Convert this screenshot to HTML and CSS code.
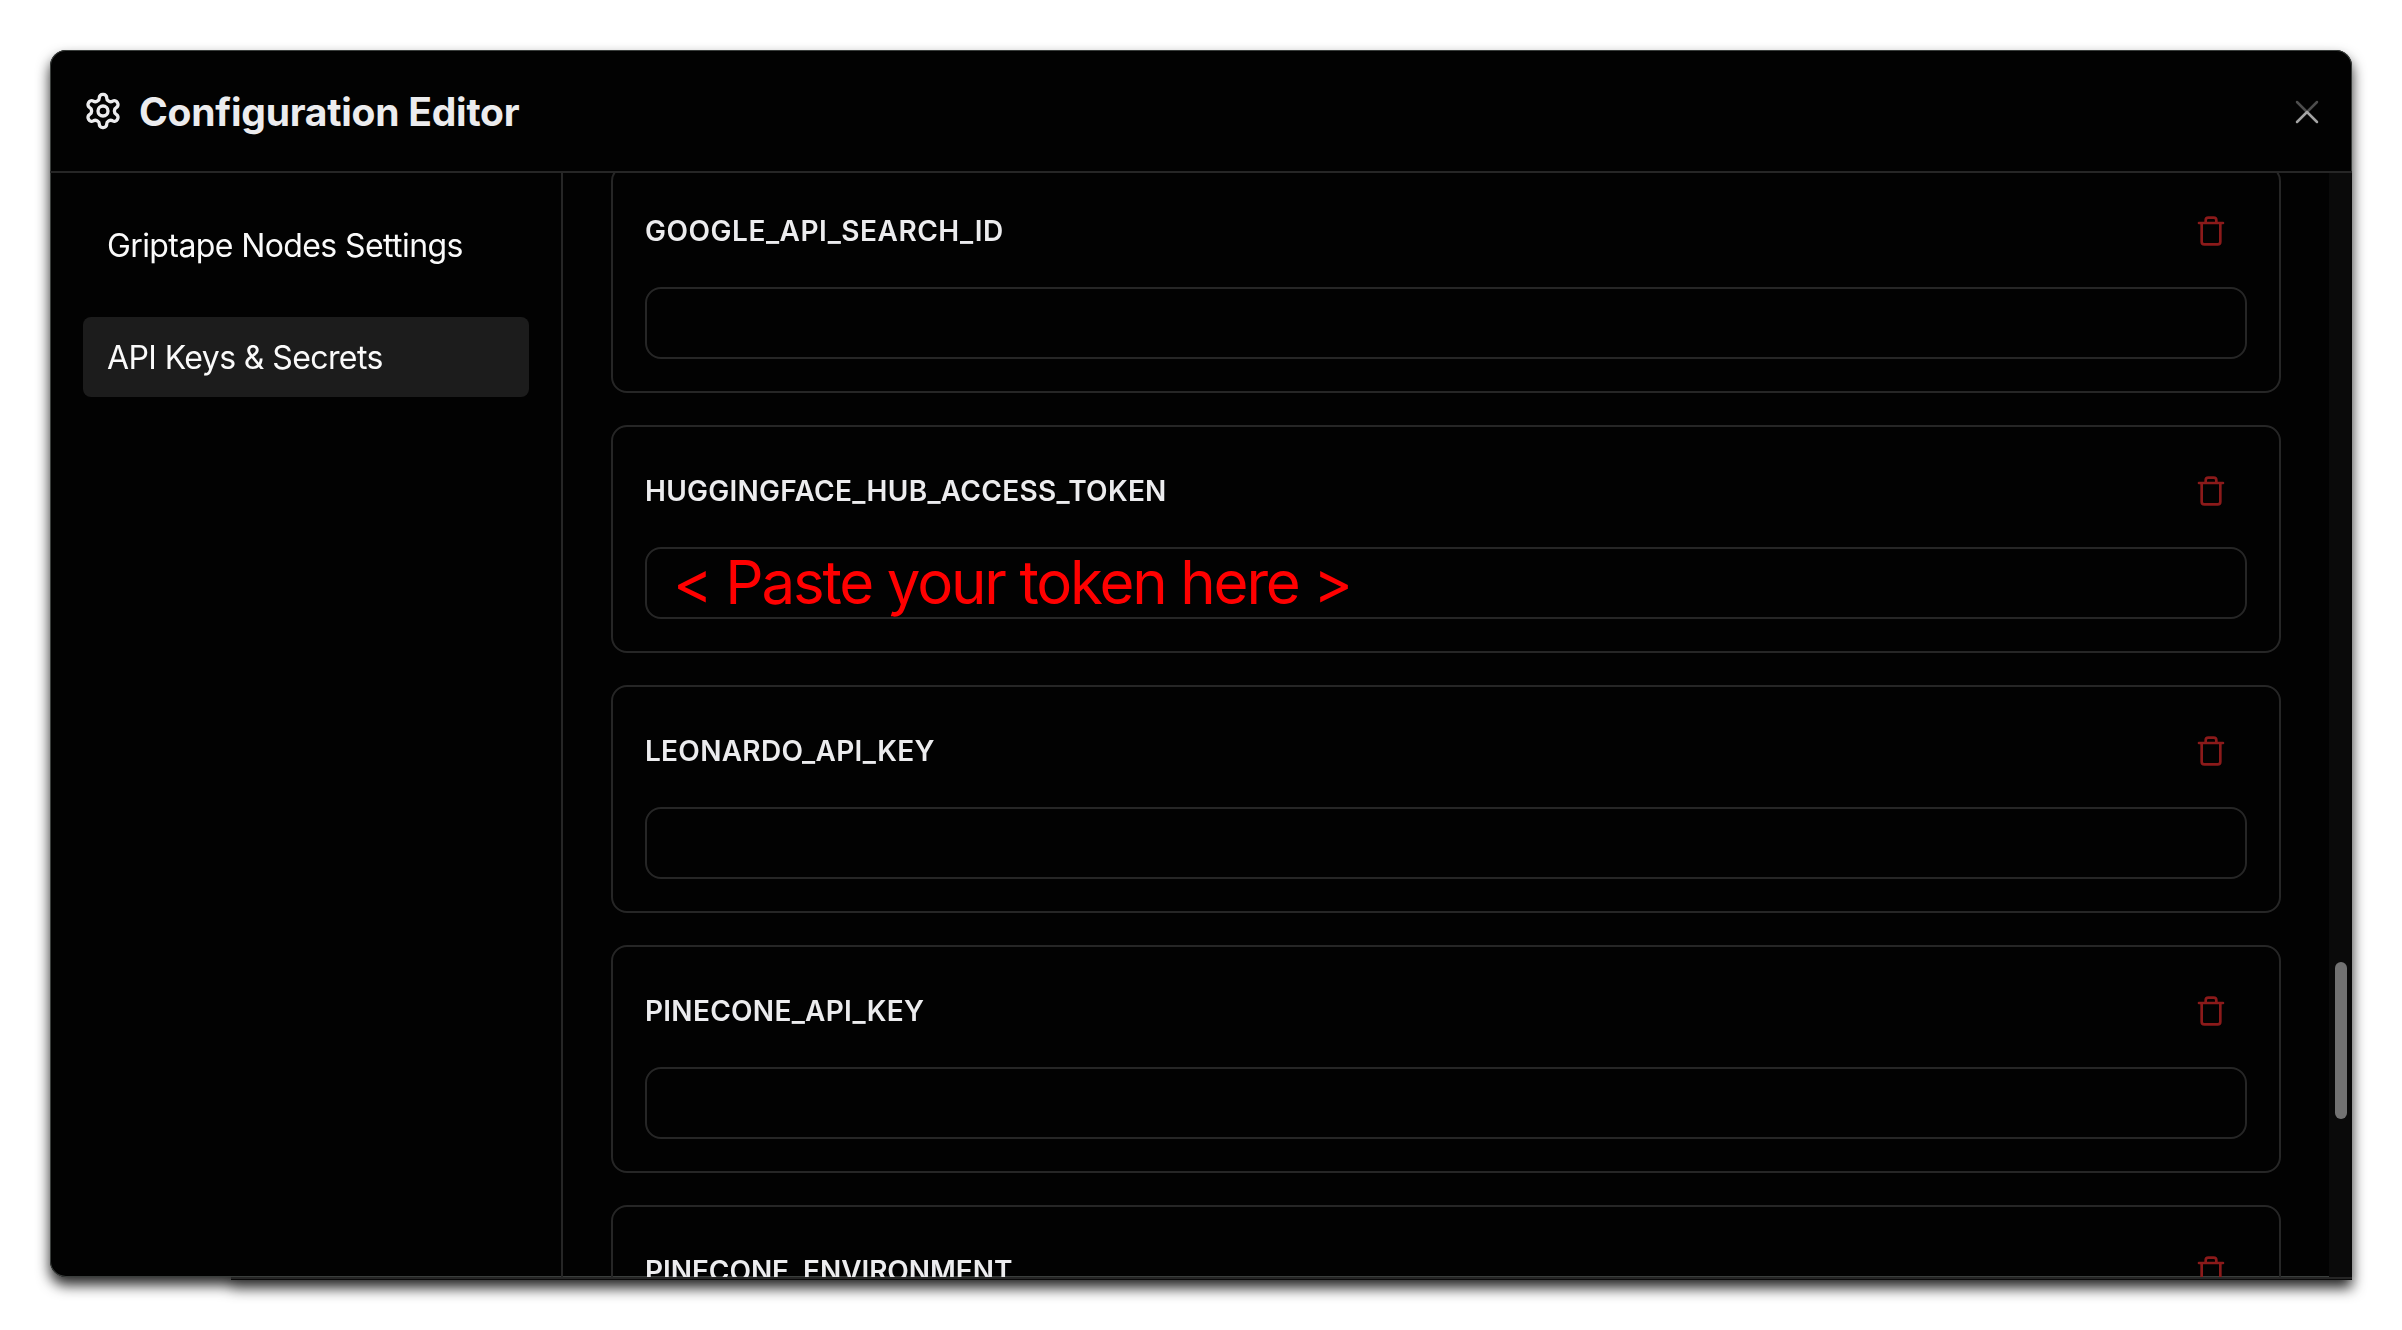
FILE: index.html
```html
<!DOCTYPE html>
<html lang="en">
<head>
<meta charset="utf-8">
<title>Configuration Editor</title>
<link rel="stylesheet" href="styles.css">
</head>
<body>
<svg class="sprite" aria-hidden="true">
  <symbol id="trash" viewBox="0 0 24 24"><path d="M3 6h18M19 6v14a2 2 0 0 1-2 2H7a2 2 0 0 1-2-2V6M8 6V4a2 2 0 0 1 2-2h4a2 2 0 0 1 2 2v2"/></symbol>
</svg>
<div class="window">
  <main class="modal">
    <header class="header">
      <svg class="gear" viewBox="0 0 24 24"><path d="M12.22 2h-.44a2 2 0 0 0-2 2v.18a2 2 0 0 1-1 1.73l-.43.25a2 2 0 0 1-2 0l-.15-.08a2 2 0 0 0-2.73.73l-.22.38a2 2 0 0 0 .73 2.73l.15.1a2 2 0 0 1 1 1.72v.51a2 2 0 0 1-1 1.74l-.15.09a2 2 0 0 0-.73 2.73l.22.38a2 2 0 0 0 2.73.73l.15-.08a2 2 0 0 1 2 0l.43.25a2 2 0 0 1 1 1.73V20a2 2 0 0 0 2 2h.44a2 2 0 0 0 2-2v-.18a2 2 0 0 1 1-1.73l.43-.25a2 2 0 0 1 2 0l.15.08a2 2 0 0 0 2.73-.73l.22-.39a2 2 0 0 0-.73-2.73l-.15-.08a2 2 0 0 1-1-1.74v-.5a2 2 0 0 1 1-1.74l.15-.09a2 2 0 0 0 .73-2.73l-.22-.38a2 2 0 0 0-2.73-.73l-.15.08a2 2 0 0 1-2 0l-.43-.25a2 2 0 0 1-1-1.73V4a2 2 0 0 0-2-2z"/><circle cx="12" cy="12" r="3"/></svg>
      <h1 class="title">Configuration Editor</h1>
      <button class="close" aria-label="Close"><svg viewBox="0 0 24 24"><path class="close-top" d="M6 6l6 6 6-6"/><path class="close-bottom" d="M6 18l6-6 6 6"/></svg></button>
    </header>
    <div class="body">
      <nav class="sidebar">
        <a class="nav-item">Griptape Nodes Settings</a>
        <a class="nav-item active">API Keys &amp; Secrets</a>
      </nav>
      <section class="content">
        <div class="card"><div class="card-head"><span class="label loose">GOOGLE_API_SEARCH_ID</span><svg class="trash"><use href="#trash"/></svg></div><div class="field"></div></div>
        <div class="card"><div class="card-head"><span class="label">HUGGINGFACE_HUB_ACCESS_TOKEN</span><svg class="trash"><use href="#trash"/></svg></div><div class="field"><span class="hint">&lt; Paste your token here &gt;</span></div></div>
        <div class="card"><div class="card-head"><span class="label">LEONARDO_API_KEY</span><svg class="trash"><use href="#trash"/></svg></div><div class="field"></div></div>
        <div class="card"><div class="card-head"><span class="label">PINECONE_API_KEY</span><svg class="trash"><use href="#trash"/></svg></div><div class="field"></div></div>
        <div class="card"><div class="card-head"><span class="label tight">PINECONE_ENVIRONMENT</span><svg class="trash"><use href="#trash"/></svg></div><div class="field"></div></div>
      </section>
      <div class="scrollbar"><div class="thumb"></div></div>
    </div>
  </main>
  <div class="bottom-edge"></div>
</div>
</body>
</html>
```
FILE: styles.css
```css
* { box-sizing: border-box; }
html, body { height: 100%; }
body {
  margin: 0;
  padding: 50px;
  overflow: hidden;
  background: #fff;
  font-family: Inter, "Liberation Sans", sans-serif;
  color: #ececee;
}
.sprite { display: none; }
svg { fill: none; stroke: currentColor; stroke-width: 2; stroke-linecap: round; stroke-linejoin: round; }
.window { height: 1230px; filter: drop-shadow(0 8px 7px rgba(0, 0, 0, .85)); }
.modal {
  height: 1227px;
  display: flex;
  flex-direction: column;
  background: #020202;
  border-radius: 16px 16px 0 16px;
  box-shadow: inset 0 0 0 1px #3a3e3c;
  overflow: hidden;
}
.bottom-edge { height: 3px; margin-left: 181px; background: #0a0a0a; border-top: 2px solid #262626; }
.header {
  flex: none;
  height: 123px;
  display: flex;
  align-items: center;
  gap: 16px;
  padding: 1px 31px 0 33px;
  border-bottom: 2px solid #262626;
}
.gear { width: 40px; height: 40px; }
.title { margin: 0; padding-top: 1px; font-size: 39px; font-weight: 700; line-height: 56px; letter-spacing: -0.24px; white-space: nowrap; }
.close { margin: 2px -6px 0 auto; width: 40px; height: 40px; padding: 0; border: 0; background: none; }
.close svg { display: block; width: 40px; height: 40px; stroke-width: 1.5; }
.close-top { stroke: #4d4d4d; }
.close-bottom { stroke: #a3a3a3; }
.body { flex: 1; min-height: 0; display: flex; }
.sidebar {
  width: 513px;
  padding: 32px 32px 0 33px;
  border-right: 2px solid #262626;
  display: flex;
  flex-direction: column;
  gap: 32px;
}
.nav-item {
  height: 80px;
  padding: 1px 24px 0;
  display: flex;
  align-items: center;
  border-radius: 8px;
  font-size: 32px;
  letter-spacing: -0.6px;
  color: #fafafa;
  white-space: nowrap;
}
.active { background: #1c1c1c; }
.content { flex: 1; padding: 0 48px; overflow: hidden; }
.card {
  height: 228px;
  margin-bottom: 32px;
  padding: 32px;
  border: 2px solid #262626;
  border-radius: 16px;
}
.card:first-child { margin-top: -8px; }
.card-head { height: 64px; margin-bottom: 24px; padding-right: 20px; display: flex; align-items: center; justify-content: space-between; }
.label { font-size: 28px; font-weight: 600; letter-spacing: 0.28px; white-space: nowrap; }
.loose { letter-spacing: 0.52px; }
.tight { letter-spacing: -0.05px; }
.trash { width: 32px; height: 32px; color: #8b1a1a; }
.field { height: 72px; padding-left: 26px; border: 2px solid #262626; border-radius: 16px; display: flex; align-items: center; }
.hint { padding-bottom: 2px; font-size: 60px; line-height: 68px; letter-spacing: -2.17px; color: #f00; white-space: nowrap; }
.scrollbar { width: 23px; padding: 789px 5px 0 6px; background: #0a0a0a; }
.thumb { height: 157px; border-radius: 6px; background: #727272; }
```
